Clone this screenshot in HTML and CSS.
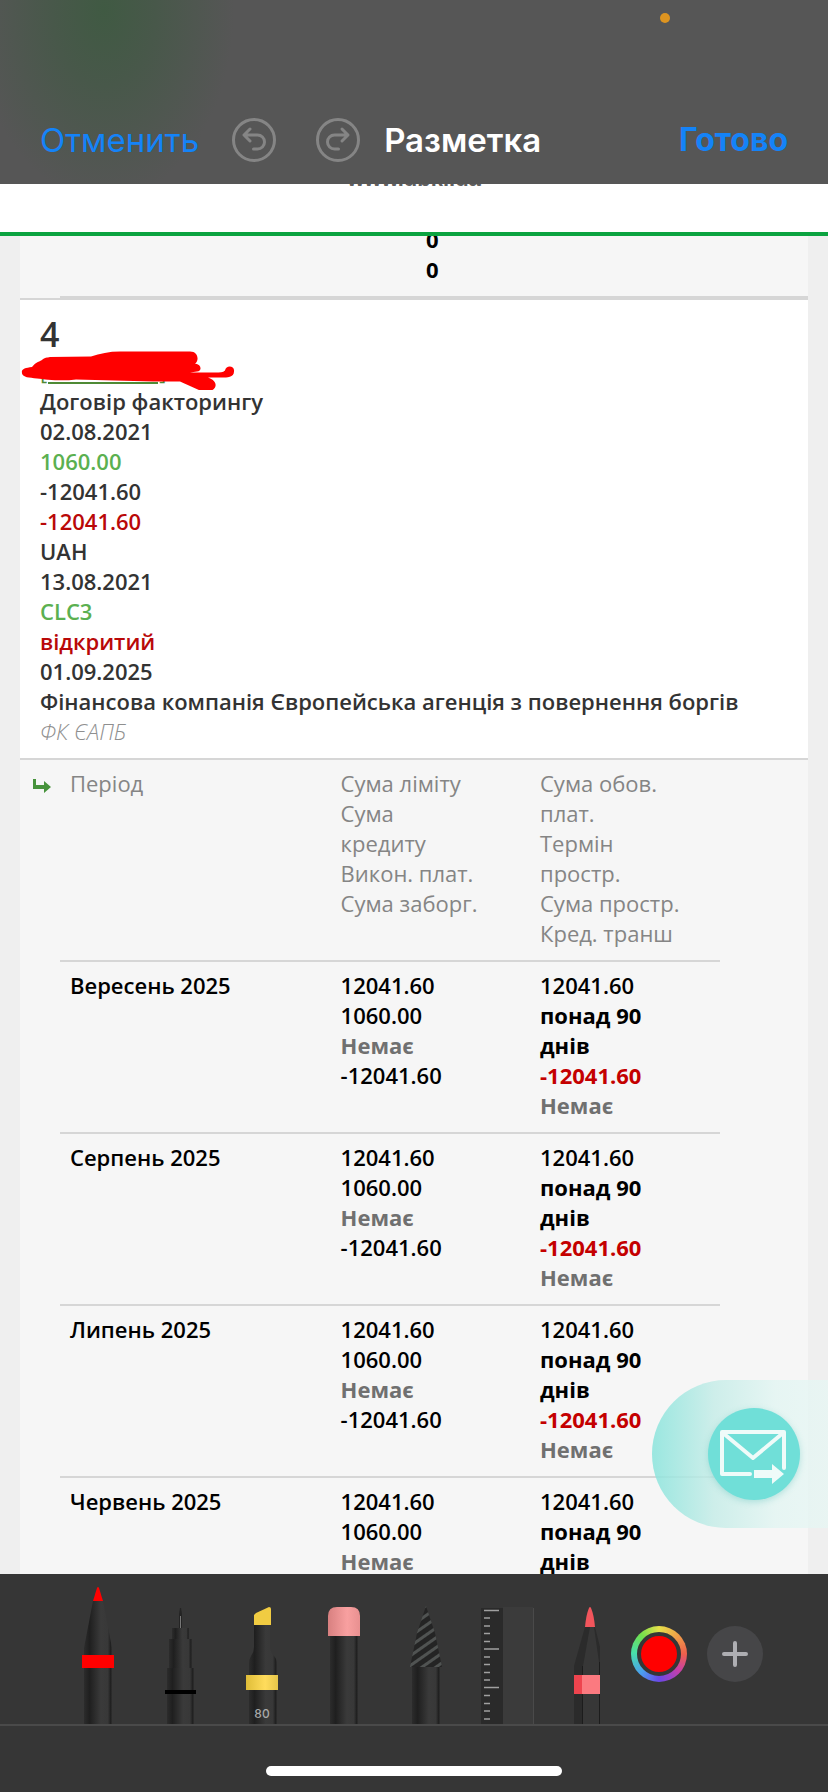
FILE: index.html
```
<!DOCTYPE html>
<html lang="uk">
	<head>
		<meta charset="utf-8">
		<meta name="viewport" content="width=device-width, initial-scale=1">
		<title>Разметка</title>
		<link rel="stylesheet" href="styles.css">
	</head>
	<body>
		<header class="topbar">
			<span class="status-dot"></span>
			<button class="cancel">Отменить</button>
			<button class="round" aria-label="Undo">
				<svg width="44" height="44" viewBox="0 0 44 44"><circle cx="22" cy="22" r="20.5"/><path d="M18 11l-6 6 6 6M12.500 17h13a6.500 6.500 0 0 1 0 14h-4"/></svg>
			</button>
			<button class="round redo" aria-label="Redo">
				<svg width="44" height="44" viewBox="0 0 44 44"><circle cx="22" cy="22" r="20.5"/><path d="M26 11l6 6-6 6M31.500 17h-13a6.500 6.500 0 0 0 0 14h4"/></svg>
			</button>
			<h1>Разметка</h1>
			<button class="done">Готово</button>
		</header>

		<main class="page">
			<div class="site-head"><span>www.ubki.ua</span></div>
			<div class="report">
				<div class="prev"><p>0<br>0</p></div>

				<section class="deal">
					<h2>4</h2>
					<div class="number">
						<a href="#">[<span></span>]</a>
						<svg class="scribble" width="216" height="40" viewBox="20 350 216 40"><path fill="#ff0000" d="M22 373c-1-4 3-5 10-6c3-4 6-5 10-7c3-3 5-2 8-3l41-.5c9-3 18-5 29-5h70c9 0 9 10 5 12c7 1 7 8 2 8l-7 1h25c5 0 8 0 10-2c1-6 10-5 9 1c0 6-7 6-12 6h-14c6 2 9 6 7 10c-3 5-10 4-15 3l-20-9h-27l-77-2c-15 2-30 0-39-1c-8-1-14-1-15-5z"/></svg>
					</div>
					<p>Договір факторингу</p>
					<p>02.08.2021</p>
					<p class="green">1060.00</p>
					<p>-12041.60</p>
					<p class="red">-12041.60</p>
					<p>UAH</p>
					<p>13.08.2021</p>
					<p class="green">CLC3</p>
					<p class="red">відкритий</p>
					<p>01.09.2025</p>
					<p>Фінансова компанія Європейська агенція з повернення боргів</p>
					<p class="alias">ФК ЄАПБ</p>
				</section>

				<section class="history">
					<svg class="arrow" width="20" height="14" viewBox="0 0 20 14"><path fill="#47933c" d="M1 0h3v6h8V2l7 6-7 6v-4H1z"/></svg>
					<table>
						<thead>
							<tr>
								<th>Період</th>
								<th>Сума ліміту<br>Сума<br>кредиту<br>Викон. плат.<br>Сума заборг.</th>
								<th>Сума обов.<br>плат.<br>Термін<br>простр.<br>Сума простр.<br>Кред. транш</th>
							</tr>
						</thead>
						<tbody>
							<tr>
								<td>Вересень 2025</td>
								<td>12041.60<br>1060.00<br><b class="none">Немає</b><br>-12041.60</td>
								<td>12041.60<br><b>понад 90<br>днів</b><br><b class="debt">-12041.60</b><br><b class="none">Немає</b></td>
							</tr>
							<tr>
								<td>Серпень 2025</td>
								<td>12041.60<br>1060.00<br><b class="none">Немає</b><br>-12041.60</td>
								<td>12041.60<br><b>понад 90<br>днів</b><br><b class="debt">-12041.60</b><br><b class="none">Немає</b></td>
							</tr>
							<tr>
								<td>Липень 2025</td>
								<td>12041.60<br>1060.00<br><b class="none">Немає</b><br>-12041.60</td>
								<td>12041.60<br><b>понад 90<br>днів</b><br><b class="debt">-12041.60</b><br><b class="none">Немає</b></td>
							</tr>
							<tr>
								<td>Червень 2025</td>
								<td>12041.60<br>1060.00<br><b class="none">Немає</b><br>-12041.60</td>
								<td>12041.60<br><b>понад 90<br>днів</b><br><b class="debt">-12041.60</b><br><b class="none">Немає</b></td>
							</tr>
						</tbody>
					</table>
				</section>
			</div>

			<div class="feedback">
				<button aria-label="Написати">
					<svg width="92" height="92" viewBox="0 0 92 92" fill="none" stroke="#effbf9" stroke-width="4" stroke-linecap="round" stroke-linejoin="round">
						<path d="M42 66H14V24h62v36M15 25l30 25 30-25"/>
						<path fill="#effbf9" stroke="none" d="M46 62h18v-6l12 10-12 10v-6H46z"/>
					</svg>
				</button>
			</div>
		</main>

		<footer class="tools">
			<svg class="defs" width="0" height="0">
				<defs>
					<linearGradient id="body">
						<stop offset="0" stop-color="#2c2c2c"/>
						<stop offset=".2" stop-color="#1f1f1f"/>
						<stop offset=".6" stop-color="#3a3a3a"/>
						<stop offset=".85" stop-color="#383838"/>
						<stop offset=".95" stop-color="#202020"/>
						<stop offset="1" stop-color="#303030"/>
					</linearGradient>
					<linearGradient id="yellow"><stop offset="0" stop-color="#dfbd38"/><stop offset=".6" stop-color="#ffdc5c"/><stop offset="1" stop-color="#e5c54a"/></linearGradient>
					<linearGradient id="pink"><stop offset="0" stop-color="#d88080"/><stop offset=".6" stop-color="#f8a0a0"/><stop offset="1" stop-color="#e89090"/></linearGradient>
					<pattern id="stripes" width="8" height="8" patternUnits="userSpaceOnUse" patternTransform="rotate(-35)">
						<rect width="8" height="8" fill="#242424"/><rect width="8" height="3" fill="#505352"/>
					</pattern>
				</defs>
			</svg>
			<div class="row">
				<button class="tool" aria-label="Pen">
					<svg viewBox="0 0 82 150">
						<path fill="url(#body)" d="M36 27h10l9 47v76H27V74z"/>
						<path fill="#ff0000" d="M40 14q1-2 2 0l4 13H36z"/>
						<path fill="#ff0000" d="M25 81h32v13H25z"/>
					</svg>
				</button>
				<button class="tool" aria-label="Fineliner">
					<svg viewBox="0 0 82 150">
						<path fill="#242424" d="M40 40l1-6h1l1 6v14h-3z"/>
						<path fill="#777" d="M41 42h1v12h-1z"/>
						<path fill="url(#body)" d="M33 54h17v11H33z"/>
						<path fill="url(#body)" d="M30 65h23v29H30z"/>
						<path fill="url(#body)" d="M28 94h27v56H28z"/>
						<path fill="#000" d="M26 116h31v4H26z"/>
					</svg>
				</button>
				<button class="tool" aria-label="Marker">
					<svg viewBox="0 0 82 150">
						<path fill="url(#body)" d="M33 51h16v22q0 5 4 9 3 3 3 8v60H28V90q0-5 2-8 3-4 3-9z"/>
						<path fill="#f1cc42" d="M33 51V41l2-2 13-6q2 0 2 2v16z"/>
						<path fill="url(#yellow)" d="M25 101h32v15H25z"/>
						<text x="41" y="144" text-anchor="middle" class="size">80</text>
					</svg>
				</button>
				<button class="tool" aria-label="Eraser">
					<svg viewBox="0 0 82 150">
						<path fill="url(#body)" d="M27 62h28v88H27z"/>
						<path fill="url(#pink)" d="M25 62V42q0-9 9-9h14q9 0 9 9v20z"/>
					</svg>
				</button>
				<button class="tool" aria-label="Lasso">
					<svg viewBox="0 0 82 150">
						<path fill="url(#body)" d="M27 92h28v58H27z"/>
						<path fill="url(#stripes)" d="M41 32l9 27 7 34H25l7-34z"/>
					</svg>
				</button>
				<button class="tool" aria-label="Ruler">
					<svg viewBox="0 0 82 150">
						<path fill="#2a2a2a" d="M14 34h22v116H14z"/>
						<path fill="#3b3b3b" d="M36 33h30v117H36z"/>
						<path fill="#4a4a4a" d="M66 34h1v116h-1z"/>
						<path stroke="#a0a0a0" stroke-width="1.5" d="M17 36.500h15M17 75h15M17 113.500h15M17 44h6M17 52h6M17 59.500h6M17 67.500h6M17 83h6M17 90.500h6M17 98.500h6M17 106h6M17 121.500h6M17 129.500h6M17 137h6M17 145h6"/>
					</svg>
				</button>
				<button class="tool" aria-label="Pencil">
					<svg viewBox="0 0 82 150">
						<path fill="#2b2b2b" d="M36 53h10l5 20v77H25V92z"/>
						<path fill="#373737" d="M41 53h4l5 35v62H34V92z"/>
						<path fill="#1c1c1c" d="M33 92h1v58h-1zM50 88h1v62h-1z"/>
						<path fill="#f2555c" d="M36 53q1-12 4-19 1-2 2 0 3 7 4 19z"/>
						<path fill="#ee444e" d="M25 101h8v19h-8z"/>
						<path fill="#fb7a80" d="M33 101h18v19H33z"/>
					</svg>
				</button>
				<button class="color" aria-label="Color"><span></span></button>
				<button class="add" aria-label="Add">
					<svg width="56" height="56" viewBox="0 0 56 56"><path stroke="#aeaeb2" stroke-width="4" stroke-linecap="round" d="M28 17v22M17 28h22"/></svg>
				</button>
			</div>
			<div class="home"></div>
		</footer>
	</body>
</html>
```
FILE: styles.css
```
* {
	box-sizing: border-box;
}
body {
	margin: 0;
	height: 100vh;
	display: flex;
	flex-direction: column;
	overflow: hidden;
	font-family: "Open Sans", "Noto Sans", sans-serif;
	font-size: 22px;
	line-height: 30px;
	background: #efefef;
}
h1, h2, p {
	margin: 0;
	font-weight: 600;
}
button {
	border: 0;
	padding: 0;
	background: none;
	font: inherit;
}
svg {
	display: block;
}

/* Top bar */
.topbar {
	position: relative;
	flex: none;
	display: flex;
	align-items: center;
	height: 184px;
	padding: 96px 40px 0;
	font-family: Inter, Roboto, sans-serif;
	font-size: 33px;
	line-height: 40px;
	color: #fff;
	background: radial-gradient(ellipse 130px 190px at 104px 10px, #405a43, #48584a 40%, #565656);
}
.status-dot {
	position: absolute;
	top: 13px;
	right: 158px;
	width: 10px;
	height: 10px;
	border-radius: 50%;
	background: #dd9420;
}
.cancel, .done {
	color: #1483f8;
}
.round {
	margin-left: 33px;
}
.round.redo {
	margin-left: 40px;
}
.round svg {
	fill: none;
	stroke: #858585;
	stroke-width: 3;
	stroke-linecap: round;
	stroke-linejoin: round;
}
.topbar h1 {
	margin-left: 24px;
	font-size: 33px;
}
.done {
	margin-left: auto;
	font-size: 32px;
	font-weight: 700;
}

/* Page under the bars */
.page {
	position: relative;
	flex: 1;
	min-height: 0;
	overflow: hidden;
}
.site-head {
	display: flex;
	justify-content: center;
	align-items: flex-start;
	height: 52px;
	border-bottom: 4px solid #0ba340;
	background: #fff;
	color: #606060;
	font-family: "Liberation Sans", sans-serif;
	font-weight: 700;
}
.site-head span {
	margin-top: -20px;
}
.report {
	margin: 0 20px;
}
.prev {
	display: flex;
	align-items: flex-end;
	height: 62px;
	padding-left: 40px;
	overflow: hidden;
	background: #f6f6f6;
}
.prev p {
	width: 100%;
	padding: 0 0 12px 366px;
	border-bottom: 2px solid #d6d6d6;
	color: #000;
	font-weight: 700;
}
.deal {
	padding: 12px 20px;
	border-top: 2px solid #d6d6d6;
	border-bottom: 2px solid #d6d6d6;
	background: #fff;
	color: #333;
}
.deal h2 {
	font-size: 34px;
	line-height: 44px;
}
.number {
	position: relative;
	height: 30px;
}
.number a {
	color: #4f8a35;
	text-decoration: none;
}
.number a span {
	display: inline-block;
	width: 110px;
	margin: 0 1px -4px;
	border-bottom: 2px solid #4f8a35;
}
.scribble {
	position: absolute;
	top: -6px;
	left: -20px;
}
.deal .green {
	color: #5bb050;
}
.deal .red {
	color: #b90808;
}
.deal .alias {
	color: #8f8f8f;
	font-style: italic;
	font-weight: 300;
}

/* Payments by month */
.history {
	position: relative;
	padding: 0 88px 0 40px;
	background: #f6f6f6;
}
.arrow {
	position: absolute;
	top: 19px;
	left: 12px;
}
table {
	width: 100%;
	table-layout: fixed;
	border-collapse: separate;
	border-spacing: 0;
}
th, td {
	padding: 8px 0 12px 10px;
	border-bottom: 2px solid #d6d6d6;
	text-align: left;
	vertical-align: top;
}
th {
	color: #858585;
	font-weight: 400;
}
th:first-child {
	width: 41%;
}
th:last-child {
	width: 190px;
}
td {
	color: #000;
	font-weight: 600;
}
td b {
	font-weight: 700;
}
.none {
	color: #707070;
}
.debt {
	color: #c40000;
}

/* Mail button stuck to the right edge */
.feedback {
	position: absolute;
	right: 0;
	bottom: 46px;
	display: flex;
	align-items: center;
	width: 176px;
	height: 148px;
	padding-left: 56px;
	border-radius: 74px 0 0 74px;
	background: linear-gradient(90deg, rgba(138, 228, 220, .85), rgba(195, 236, 231, .8) 35%, rgba(226, 245, 242, .8) 70%, rgba(230, 247, 244, .7));
}
.feedback button {
	border-radius: 50%;
	background: #70dfd8;
	box-shadow: 0 2px 6px rgba(80, 190, 180, .35);
}

/* Drawing tools */
.tools {
	flex: none;
	background: #363636;
}
.defs {
	position: absolute;
}
.row {
	display: flex;
	align-items: center;
	height: 152px;
	padding-left: 57px;
	border-bottom: 2px solid #4a4a4a;
}
.tool {
	flex: none;
	width: 82px;
	height: 150px;
}
.size {
	fill: #a8a8a8;
	font-family: Inter, sans-serif;
	font-size: 12px;
	font-weight: 500;
}
.color, .add {
	flex: none;
	width: 56px;
	height: 56px;
	margin-top: 10px;
	border-radius: 50%;
}
.color {
	padding: 6px;
	background: conic-gradient(#e6e04a, #f0a348 12%, #ee5f4c 25%, #c63fa8 36%, #6a48e8 50%, #4b9ef0 62%, #48e0a8 76%, #72e04c 88%, #e6e04a);
}
.color span {
	display: block;
	height: 44px;
	border: 4px solid #363636;
	border-radius: 50%;
	background: #ff0000;
}
.add {
	margin-left: 20px;
	background: #464648;
}
.home {
	width: 296px;
	height: 10px;
	margin: 40px auto 16px;
	border-radius: 5px;
	background: #fff;
}
```
